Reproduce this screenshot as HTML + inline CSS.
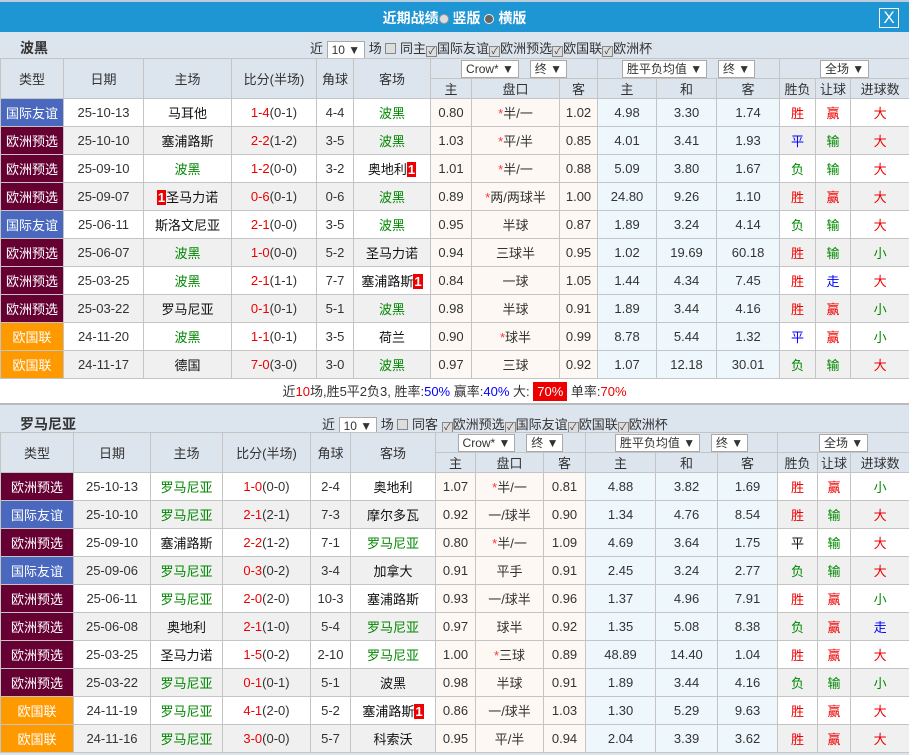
<!DOCTYPE html>
<html><head><meta charset="utf-8">
<style>
*{margin:0;padding:0;box-sizing:border-box}
body{width:909px;height:755px;overflow:hidden;background:#dce4ee;font-family:"Liberation Sans","Noto Sans CJK SC",sans-serif;font-size:13px;color:#333;position:relative}
.title{position:absolute;left:0;top:0;width:909px;height:32px;background:#1e96d4;color:#fff;text-align:center;font-size:14px;font-weight:bold;line-height:32px;border-top:2px solid #bcd}
.title .r{display:inline-block;width:10px;height:10px;border-radius:50%;background:#ddd;border:1px solid #999;vertical-align:-1px}
.title .x{position:absolute;right:10px;top:6px;width:20px;height:20px;border:1px solid #fff;font-size:17px;line-height:18px;font-weight:normal}
.bar{position:absolute;left:0;width:909px;height:25px}
.bar .nm{position:absolute;left:20px;top:4px;font-size:14px;font-weight:bold;color:#333}
.bar .ctl{position:absolute;top:4px;font-size:13px}
.sel{display:inline-block;border:1px solid #aaa;background:#fff;padding:0 4px;height:18px;line-height:16px;font-size:12px;vertical-align:middle}
.cb{display:inline-block;width:11px;height:11px;border:1px solid #888;background:#ddd;vertical-align:-1px;font-size:9px;line-height:9px;text-align:center}
table{position:absolute;left:0;border-collapse:collapse;table-layout:fixed;width:909px}
td{border:1px solid #c4c4c4;text-align:center;height:28px;white-space:nowrap;overflow:hidden;font-size:13px;background:#fff}
tr.g td{background:#f0f0f0}
th{border:1px solid #c4c4c4;font-weight:normal;background:#dce4ee;height:20px;font-size:13px;color:#333}
td.p{background:#fdf8f4!important}
td.o{background:#eef7fb!important}
td.t{color:#fff!important}
.fr{background:#4a68bd!important}.eu{background:#660033!important}.nl{background:#ff9900!important}
.gr{color:#080}.rd{color:#e00}.bl{color:#00f}.dk{color:#111}
.b1{background:#e00;color:#fff;font-weight:bold;padding:0 1px}
.s{color:#f33}
.sum{position:absolute;left:0;top:379px;width:909px;height:26px;background:#fff;text-align:center;line-height:26px;border-bottom:2px solid #bbb}
</style></head><body>
<div class="title">近期战绩<span class="r"></span> 竖版 <span class="r" style="background:#666;border-color:#eee"></span> 横版<div class="x">X</div></div>

<div class="bar" style="top:34px"><span class="nm">波黑</span><span class="ctl" style="left:310px">近 <span class="sel">10 ▼</span> 场 <span class="cb"></span> 同主<span class="cb">✓</span>国际友谊<span class="cb">✓</span>欧洲预选<span class="cb">✓</span>欧国联<span class="cb">✓</span>欧洲杯</span></div>

<table style="top:58px">
<colgroup><col style="width:63px"><col style="width:80px"><col style="width:88px"><col style="width:85px"><col style="width:37px"><col style="width:77px"><col style="width:41px"><col style="width:88px"><col style="width:38px"><col style="width:59px"><col style="width:60px"><col style="width:63px"><col style="width:36px"><col style="width:35px"><col style="width:59px"></colgroup>
<tr><th rowspan="2">类型</th><th rowspan="2">日期</th><th rowspan="2">主场</th><th rowspan="2">比分(半场)</th><th rowspan="2">角球</th><th rowspan="2">客场</th><th colspan="3"><span class="sel">Crow* ▼</span> &nbsp; <span class="sel">终 ▼</span></th><th colspan="3"><span class="sel">胜平负均值 ▼</span> &nbsp; <span class="sel">终 ▼</span></th><th colspan="3"><span class="sel">全场 ▼</span></th></tr>
<tr><th>主</th><th>盘口</th><th>客</th><th>主</th><th>和</th><th>客</th><th>胜负</th><th>让球</th><th>进球数</th></tr>
<tr><td class="t fr">国际友谊</td><td>25-10-13</td><td class="dk">马耳他</td><td><span class="rd">1-4</span>(0-1)</td><td>4-4</td><td class="gr">波黑</td><td class="p">0.80</td><td class="p"><span class="s">*</span>半/一</td><td class="p">1.02</td><td class="o">4.98</td><td class="o">3.30</td><td class="o">1.74</td><td class="rd">胜</td><td class="rd">赢</td><td class="rd">大</td></tr>
<tr class="g"><td class="t eu">欧洲预选</td><td>25-10-10</td><td class="dk">塞浦路斯</td><td><span class="rd">2-2</span>(1-2)</td><td>3-5</td><td class="gr">波黑</td><td class="p">1.03</td><td class="p"><span class="s">*</span>平/半</td><td class="p">0.85</td><td class="o">4.01</td><td class="o">3.41</td><td class="o">1.93</td><td class="bl">平</td><td class="gr">输</td><td class="rd">大</td></tr>
<tr><td class="t eu">欧洲预选</td><td>25-09-10</td><td class="gr">波黑</td><td><span class="rd">1-2</span>(0-0)</td><td>3-2</td><td class="dk">奥地利<span class="b1">1</span></td><td class="p">1.01</td><td class="p"><span class="s">*</span>半/一</td><td class="p">0.88</td><td class="o">5.09</td><td class="o">3.80</td><td class="o">1.67</td><td class="gr">负</td><td class="gr">输</td><td class="rd">大</td></tr>
<tr class="g"><td class="t eu">欧洲预选</td><td>25-09-07</td><td class="dk"><span class="b1">1</span>圣马力诺</td><td><span class="rd">0-6</span>(0-1)</td><td>0-6</td><td class="gr">波黑</td><td class="p">0.89</td><td class="p"><span class="s">*</span>两/两球半</td><td class="p">1.00</td><td class="o">24.80</td><td class="o">9.26</td><td class="o">1.10</td><td class="rd">胜</td><td class="rd">赢</td><td class="rd">大</td></tr>
<tr><td class="t fr">国际友谊</td><td>25-06-11</td><td class="dk">斯洛文尼亚</td><td><span class="rd">2-1</span>(0-0)</td><td>3-5</td><td class="gr">波黑</td><td class="p">0.95</td><td class="p">半球</td><td class="p">0.87</td><td class="o">1.89</td><td class="o">3.24</td><td class="o">4.14</td><td class="gr">负</td><td class="gr">输</td><td class="rd">大</td></tr>
<tr class="g"><td class="t eu">欧洲预选</td><td>25-06-07</td><td class="gr">波黑</td><td><span class="rd">1-0</span>(0-0)</td><td>5-2</td><td class="dk">圣马力诺</td><td class="p">0.94</td><td class="p">三球半</td><td class="p">0.95</td><td class="o">1.02</td><td class="o">19.69</td><td class="o">60.18</td><td class="rd">胜</td><td class="gr">输</td><td class="gr">小</td></tr>
<tr><td class="t eu">欧洲预选</td><td>25-03-25</td><td class="gr">波黑</td><td><span class="rd">2-1</span>(1-1)</td><td>7-7</td><td class="dk">塞浦路斯<span class="b1">1</span></td><td class="p">0.84</td><td class="p">一球</td><td class="p">1.05</td><td class="o">1.44</td><td class="o">4.34</td><td class="o">7.45</td><td class="rd">胜</td><td class="bl">走</td><td class="rd">大</td></tr>
<tr class="g"><td class="t eu">欧洲预选</td><td>25-03-22</td><td class="dk">罗马尼亚</td><td><span class="rd">0-1</span>(0-1)</td><td>5-1</td><td class="gr">波黑</td><td class="p">0.98</td><td class="p">半球</td><td class="p">0.91</td><td class="o">1.89</td><td class="o">3.44</td><td class="o">4.16</td><td class="rd">胜</td><td class="rd">赢</td><td class="gr">小</td></tr>
<tr><td class="t nl">欧国联</td><td>24-11-20</td><td class="gr">波黑</td><td><span class="rd">1-1</span>(0-1)</td><td>3-5</td><td class="dk">荷兰</td><td class="p">0.90</td><td class="p"><span class="s">*</span>球半</td><td class="p">0.99</td><td class="o">8.78</td><td class="o">5.44</td><td class="o">1.32</td><td class="bl">平</td><td class="rd">赢</td><td class="gr">小</td></tr>
<tr class="g"><td class="t nl">欧国联</td><td>24-11-17</td><td class="dk">德国</td><td><span class="rd">7-0</span>(3-0)</td><td>3-0</td><td class="gr">波黑</td><td class="p">0.97</td><td class="p">三球</td><td class="p">0.92</td><td class="o">1.07</td><td class="o">12.18</td><td class="o">30.01</td><td class="gr">负</td><td class="gr">输</td><td class="rd">大</td></tr>
</table>

<div class="sum">近<span class="rd">10</span>场,胜5平2负3, 胜率:<span class="bl">50%</span> 赢率:<span class="bl">40%</span> 大: <span style="background:#e00;color:#fff;padding:2px 4px">70%</span> 单率:<span class="rd">70%</span></div>

<div class="bar" style="top:410px"><span class="nm">罗马尼亚</span><span class="ctl" style="left:322px">近 <span class="sel">10 ▼</span> 场 <span class="cb"></span> 同客 <span class="cb">✓</span>欧洲预选<span class="cb">✓</span>国际友谊<span class="cb">✓</span>欧国联<span class="cb">✓</span>欧洲杯</span></div>

<table style="top:432px">
<colgroup><col style="width:73px"><col style="width:77px"><col style="width:72px"><col style="width:88px"><col style="width:40px"><col style="width:85px"><col style="width:40px"><col style="width:68px"><col style="width:42px"><col style="width:70px"><col style="width:62px"><col style="width:60px"><col style="width:40px"><col style="width:33px"><col style="width:59px"></colgroup>
<tr><th rowspan="2">类型</th><th rowspan="2">日期</th><th rowspan="2">主场</th><th rowspan="2">比分(半场)</th><th rowspan="2">角球</th><th rowspan="2">客场</th><th colspan="3"><span class="sel">Crow* ▼</span> &nbsp; <span class="sel">终 ▼</span></th><th colspan="3"><span class="sel">胜平负均值 ▼</span> &nbsp; <span class="sel">终 ▼</span></th><th colspan="3"><span class="sel">全场 ▼</span></th></tr>
<tr><th>主</th><th>盘口</th><th>客</th><th>主</th><th>和</th><th>客</th><th>胜负</th><th>让球</th><th>进球数</th></tr>
<tr><td class="t eu">欧洲预选</td><td>25-10-13</td><td class="gr">罗马尼亚</td><td><span class="rd">1-0</span>(0-0)</td><td>2-4</td><td class="dk">奥地利</td><td class="p">1.07</td><td class="p"><span class="s">*</span>半/一</td><td class="p">0.81</td><td class="o">4.88</td><td class="o">3.82</td><td class="o">1.69</td><td class="rd">胜</td><td class="rd">赢</td><td class="gr">小</td></tr>
<tr class="g"><td class="t fr">国际友谊</td><td>25-10-10</td><td class="gr">罗马尼亚</td><td><span class="rd">2-1</span>(2-1)</td><td>7-3</td><td class="dk">摩尔多瓦</td><td class="p">0.92</td><td class="p">一/球半</td><td class="p">0.90</td><td class="o">1.34</td><td class="o">4.76</td><td class="o">8.54</td><td class="rd">胜</td><td class="gr">输</td><td class="rd">大</td></tr>
<tr><td class="t eu">欧洲预选</td><td>25-09-10</td><td class="dk">塞浦路斯</td><td><span class="rd">2-2</span>(1-2)</td><td>7-1</td><td class="gr">罗马尼亚</td><td class="p">0.80</td><td class="p"><span class="s">*</span>半/一</td><td class="p">1.09</td><td class="o">4.69</td><td class="o">3.64</td><td class="o">1.75</td><td class="dk">平</td><td class="gr">输</td><td class="rd">大</td></tr>
<tr class="g"><td class="t fr">国际友谊</td><td>25-09-06</td><td class="gr">罗马尼亚</td><td><span class="rd">0-3</span>(0-2)</td><td>3-4</td><td class="dk">加拿大</td><td class="p">0.91</td><td class="p">平手</td><td class="p">0.91</td><td class="o">2.45</td><td class="o">3.24</td><td class="o">2.77</td><td class="gr">负</td><td class="gr">输</td><td class="rd">大</td></tr>
<tr><td class="t eu">欧洲预选</td><td>25-06-11</td><td class="gr">罗马尼亚</td><td><span class="rd">2-0</span>(2-0)</td><td>10-3</td><td class="dk">塞浦路斯</td><td class="p">0.93</td><td class="p">一/球半</td><td class="p">0.96</td><td class="o">1.37</td><td class="o">4.96</td><td class="o">7.91</td><td class="rd">胜</td><td class="rd">赢</td><td class="gr">小</td></tr>
<tr class="g"><td class="t eu">欧洲预选</td><td>25-06-08</td><td class="dk">奥地利</td><td><span class="rd">2-1</span>(1-0)</td><td>5-4</td><td class="gr">罗马尼亚</td><td class="p">0.97</td><td class="p">球半</td><td class="p">0.92</td><td class="o">1.35</td><td class="o">5.08</td><td class="o">8.38</td><td class="gr">负</td><td class="rd">赢</td><td class="bl">走</td></tr>
<tr><td class="t eu">欧洲预选</td><td>25-03-25</td><td class="dk">圣马力诺</td><td><span class="rd">1-5</span>(0-2)</td><td>2-10</td><td class="gr">罗马尼亚</td><td class="p">1.00</td><td class="p"><span class="s">*</span>三球</td><td class="p">0.89</td><td class="o">48.89</td><td class="o">14.40</td><td class="o">1.04</td><td class="rd">胜</td><td class="rd">赢</td><td class="rd">大</td></tr>
<tr class="g"><td class="t eu">欧洲预选</td><td>25-03-22</td><td class="gr">罗马尼亚</td><td><span class="rd">0-1</span>(0-1)</td><td>5-1</td><td class="dk">波黑</td><td class="p">0.98</td><td class="p">半球</td><td class="p">0.91</td><td class="o">1.89</td><td class="o">3.44</td><td class="o">4.16</td><td class="gr">负</td><td class="gr">输</td><td class="gr">小</td></tr>
<tr><td class="t nl">欧国联</td><td>24-11-19</td><td class="gr">罗马尼亚</td><td><span class="rd">4-1</span>(2-0)</td><td>5-2</td><td class="dk">塞浦路斯<span class="b1">1</span></td><td class="p">0.86</td><td class="p">一/球半</td><td class="p">1.03</td><td class="o">1.30</td><td class="o">5.29</td><td class="o">9.63</td><td class="rd">胜</td><td class="rd">赢</td><td class="rd">大</td></tr>
<tr class="g"><td class="t nl">欧国联</td><td>24-11-16</td><td class="gr">罗马尼亚</td><td><span class="rd">3-0</span>(0-0)</td><td>5-7</td><td class="dk">科索沃</td><td class="p">0.95</td><td class="p">平/半</td><td class="p">0.94</td><td class="o">2.04</td><td class="o">3.39</td><td class="o">3.62</td><td class="rd">胜</td><td class="rd">赢</td><td class="rd">大</td></tr>
</table>
</body></html>
